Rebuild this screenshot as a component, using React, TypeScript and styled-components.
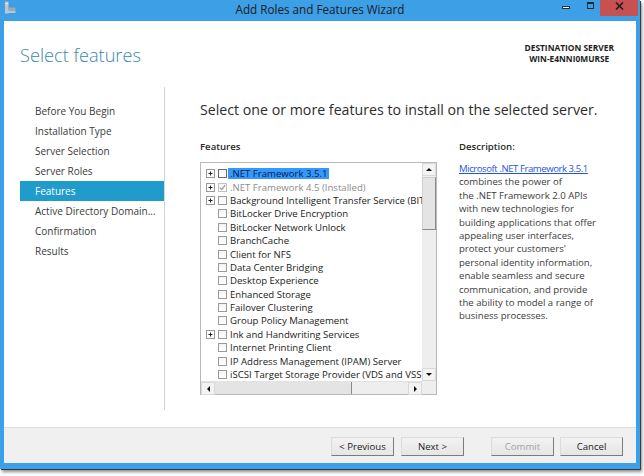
import React from 'react';
import styled, { createGlobalStyle } from 'styled-components';

const GlobalStyle = createGlobalStyle`
  html, body {
    margin: 0;
    padding: 0;
    background: #ffffff;
  }
  body {
    font-family: "Open Sans", "Noto Sans", sans-serif;
  }
  svg {
    display: block;
  }
`;

const Stage = styled.div`
  width: 644px;
  height: 476px;
  background: #ffffff;
  overflow: hidden;
`;

const Window = styled.div`
  width: 640px;
  height: 469px;
  box-sizing: border-box;
  padding-bottom: 6px;
  background: #3d9fe6;
  display: flex;
  flex-direction: column;
  box-shadow: 1px 1px 0 #3a3a3a, 2px 3px 3px rgba(0, 0, 0, 0.45);
`;

const TitleBar = styled.div`
  height: 21px;
  display: grid;
  grid-template-columns: 1fr auto 1fr;
  align-items: start;
`;

const AppIcon = styled.svg`
  margin: 1px 0 0 4px;
`;

const Title = styled.div`
  font-size: 11.7px;
  line-height: 19px;
  color: #1b1b1b;
`;

const Controls = styled.div`
  justify-self: end;
  display: flex;
  align-items: flex-start;
  padding-right: 2px;
`;

const MinGlyph = styled.div`
  width: 6px;
  height: 1px;
  margin-top: 6px;
  background: #ffffff;
  border: 1px solid #24313d;
`;

const MaxGlyph = styled.div`
  width: 5px;
  height: 4px;
  margin: 2px 0 0 17px;
  border: 1px solid #1f2a33;
  border-top-width: 2px;
`;

const CloseButton = styled.div`
  width: 38px;
  height: 16px;
  margin-left: 6px;
  background: #c75050;
  display: flex;
  align-items: flex-start;
  justify-content: center;
  padding-top: 2px;
  box-sizing: border-box;
`;

const Client = styled.div`
  flex: 1;
  margin: 0 4px;
  background: #ffffff;
  display: flex;
  flex-direction: column;
`;

const Header = styled.div`
  height: 66px;
  flex: none;
  display: flex;
  justify-content: space-between;
  align-items: flex-start;
  padding: 0 22px 0 16px;
`;

const PageTitle = styled.h1`
  margin: 22px 0 0;
  font-size: 18.2px;
  line-height: 24px;
  font-weight: 300;
  color: #3a8aa6;
`;

const DestServer = styled.div`
  margin-top: 21px;
  font-size: 8.4px;
  line-height: 11px;
  font-weight: 700;
  color: #1e1e1e;
  text-align: center;
`;

const Body = styled.div`
  flex: 1;
  display: flex;
  min-height: 0;
`;

const Nav = styled.nav`
  width: 144px;
  flex: none;
  margin: 0 0 17px 16px;
  padding-top: 14px;
  border-right: 1px solid #d6d6d6;
`;

const NavItem = styled.div<{ $active?: boolean }>`
  height: 20px;
  line-height: 20px;
  padding-left: 15px;
  font-size: 10px;
  white-space: nowrap;
  color: ${p => (p.$active ? '#ffffff' : '#3a3a3a')};
  background: ${p => (p.$active ? '#1f9bcc' : 'transparent')};
`;

const Main = styled.div`
  flex: 1;
  padding: 13px 0 0 35px;
`;

const MainHeading = styled.h2`
  margin: 0;
  font-size: 14.2px;
  line-height: 20px;
  font-weight: 400;
  color: #2d2d2d;
  white-space: nowrap;
`;

const Columns = styled.div`
  display: flex;
  margin-top: 20px;
`;

const FeatureCol = styled.div`
  width: 237px;
  flex: none;
`;

const SectionLabel = styled.div`
  font-size: 9.6px;
  line-height: 14px;
  font-weight: 600;
  color: #2a2a2a;
  margin-bottom: 8px;
`;

const ListBox = styled.div`
  height: 233px;
  box-sizing: border-box;
  border: 1px solid #b9b9b9;
  display: grid;
  grid-template-columns: 1fr 14px;
  grid-template-rows: 1fr 13px;
`;

const Items = styled.div`
  padding-top: 4px;
  overflow: hidden;
`;

const Row = styled.div`
  height: 13.4px;
  display: flex;
  align-items: center;
  padding-left: 5px;
  white-space: nowrap;
`;

const ExpanderSlot = styled.div`
  width: 9px;
  height: 9px;
  flex: none;
  display: flex;
`;

const Check = styled.div<{ $focus?: boolean; $disabled?: boolean }>`
  width: 9px;
  height: 9px;
  flex: none;
  margin-left: 3px;
  box-sizing: border-box;
  border: 1px solid ${p => (p.$focus ? '#6a6a6a' : p.$disabled ? '#c2c2c2' : '#9a9a9a')};
  background: linear-gradient(#f4f4f4, #ffffff);
  display: flex;
  align-items: center;
  justify-content: center;
`;

const ItemLabel = styled.span<{ $selected?: boolean; $disabled?: boolean }>`
  margin-left: 1px;
  padding: 0 2px;
  font-size: 9.6px;
  line-height: 11px;
  color: ${p => (p.$disabled ? '#8c8c8c' : p.$selected ? '#0c1a44' : '#222222')};
  background: ${p => (p.$selected ? '#3399ff' : 'transparent')};
`;

const VScroll = styled.div`
  background: #eeeeee;
  display: flex;
  flex-direction: column;
`;

const HScroll = styled.div`
  background: #eeeeee;
  border-top: 1px solid #e2e2e2;
  display: flex;
`;

const Corner = styled.div`
  background: #eeeeee;
`;

const ArrowBtn = styled.div<{ $dir: 'up' | 'down' | 'left' | 'right' }>`
  width: 14px;
  height: 13px;
  flex: none;
  box-sizing: border-box;
  background: #f3f3f3;
  border: 1px solid #d9d9d9;
  display: flex;
  align-items: center;
  justify-content: center;
  margin-top: ${p => (p.$dir === 'down' ? 'auto' : '0')};
  margin-left: ${p => (p.$dir === 'right' ? 'auto' : '0')};

  &::after {
    content: '';
    width: 0;
    height: 0;
    border: 3px solid transparent;
    ${p =>
      p.$dir === 'up'
        ? 'border-bottom: 3px solid #111; border-top-width: 0;'
        : p.$dir === 'down'
        ? 'border-top: 3px solid #111; border-bottom-width: 0;'
        : p.$dir === 'left'
        ? 'border-right: 3px solid #111; border-left-width: 0;'
        : 'border-left: 3px solid #111; border-right-width: 0;'}
  }
`;

const VThumb = styled.div`
  height: 53px;
  margin-top: 1px;
  box-sizing: border-box;
  background: #e4e4e4;
  border: 1px solid #d0d0d0;
  border-right-color: #8a8a8a;
  border-bottom-color: #8a8a8a;
`;

const HThumb = styled.div`
  width: 137px;
  flex: none;
  box-sizing: border-box;
  background: #e4e4e4;
  border-right: 1px solid #8a8a8a;
`;

const DescCol = styled.div`
  width: 150px;
  flex: none;
  margin-left: 22px;
`;

const DescText = styled.div`
  font-size: 9.6px;
  line-height: 13.4px;
  color: #3c3c3c;
  white-space: nowrap;
`;

const DescLink = styled.a`
  display: block;
  color: #1f55d8;
  text-decoration: underline;
  letter-spacing: -0.45px;
`;

const DescLine = styled.div``;

const Footer = styled.div`
  height: 36px;
  flex: none;
  box-sizing: border-box;
  border-top: 1px solid #dfdfdf;
  background: #f0f0f0;
  display: flex;
  justify-content: flex-end;
  align-items: flex-start;
  padding: 9px 13px 0 0;
`;

const Button = styled.button<{ $gap: number; $disabled?: boolean }>`
  width: 63px;
  height: 19px;
  margin: 0 0 0 ${p => p.$gap}px;
  padding: 0;
  box-sizing: border-box;
  border: 1px solid;
  border-color: #dcdcdc #7c7c7c #7c7c7c #dcdcdc;
  background: linear-gradient(#f2f2f2, #e6e6e6);
  font-family: "Open Sans", "Noto Sans", sans-serif;
  font-size: 9.6px;
  line-height: 15px;
  color: ${p => (p.$disabled ? '#a3a3a3' : '#222222')};
`;

type Feature = {
  label: string;
  expand?: boolean;
  checked?: boolean;
  disabled?: boolean;
  selected?: boolean;
};

const features: Feature[] = [
  { label: '.NET Framework 3.5.1', expand: true, selected: true },
  { label: '.NET Framework 4.5 (Installed)', expand: true, checked: true, disabled: true },
  { label: 'Background Intelligent Transfer Service (BITS)', expand: true },
  { label: 'BitLocker Drive Encryption' },
  { label: 'BitLocker Network Unlock' },
  { label: 'BranchCache' },
  { label: 'Client for NFS' },
  { label: 'Data Center Bridging' },
  { label: 'Desktop Experience' },
  { label: 'Enhanced Storage' },
  { label: 'Failover Clustering' },
  { label: 'Group Policy Management' },
  { label: 'Ink and Handwriting Services', expand: true },
  { label: 'Internet Printing Client' },
  { label: 'IP Address Management (IPAM) Server' },
  { label: 'iSCSI Target Storage Provider (VDS and VSS hardware providers)' },
];

const navItems = [
  'Before You Begin',
  'Installation Type',
  'Server Selection',
  'Server Roles',
  'Features',
  'Active Directory Domain...',
  'Confirmation',
  'Results',
];

const descLines = [
  'combines the power of',
  'the .NET Framework 2.0 APIs',
  'with new technologies for',
  'building applications that offer',
  'appealing user interfaces,',
  "protect your customers'",
  'personal identity information,',
  'enable seamless and secure',
  'communication, and provide',
  'the ability to model a range of',
  'business processes.',
];

const Expander = () => (
  <svg width="9" height="9" viewBox="0 0 9 9">
    <rect x="0.5" y="0.5" width="8" height="8" fill="#fbfbfb" stroke="#9a9a9a" />
    <path d="M2.5 4.5h4M4.5 2.5v4" stroke="#222" strokeWidth="1" />
  </svg>
);

const CheckMark = () => (
  <svg width="7" height="7" viewBox="0 0 7 7">
    <path d="M0.8 3.6 L2.7 5.5 L6.2 1.2" fill="none" stroke="#9a9a9a" strokeWidth="1.2" />
  </svg>
);

const App: React.FC = () => {
  return (
    <Stage>
      <GlobalStyle />
      <Window>
        <TitleBar>
          <AppIcon width="12" height="14" viewBox="0 0 12 14">
            <rect x="1" y="0.5" width="3.5" height="12" fill="#b9c7d4" />
            <rect x="1.5" y="2" width="2.5" height="1" fill="#e8eef3" />
            <rect x="4" y="6.5" width="7.5" height="2.5" fill="#a6a6a6" />
            <rect x="4" y="9.5" width="7.5" height="2.5" fill="#c4c4c4" />
          </AppIcon>
          <Title>Add Roles and Features Wizard</Title>
          <Controls>
            <MinGlyph />
            <MaxGlyph />
            <CloseButton>
              <svg width="9" height="8" viewBox="0 0 9 8">
                <path d="M1 0.5 L8 7.5 M8 0.5 L1 7.5" stroke="#1e1e1e" strokeWidth="1.6" />
              </svg>
            </CloseButton>
          </Controls>
        </TitleBar>

        <Client>
          <Header>
            <PageTitle>Select features</PageTitle>
            <DestServer>
              DESTINATION SERVER
              <br />
              WIN-E4NNI0MURSE
            </DestServer>
          </Header>

          <Body>
            <Nav>
              {navItems.map(item => (
                <NavItem key={item} $active={item === 'Features'}>
                  {item}
                </NavItem>
              ))}
            </Nav>

            <Main>
              <MainHeading>Select one or more features to install on the selected server.</MainHeading>
              <Columns>
                <FeatureCol>
                  <SectionLabel>Features</SectionLabel>
                  <ListBox>
                    <Items>
                      {features.map(f => (
                        <Row key={f.label}>
                          <ExpanderSlot>{f.expand && <Expander />}</ExpanderSlot>
                          <Check $focus={f.selected} $disabled={f.disabled}>
                            {f.checked && <CheckMark />}
                          </Check>
                          <ItemLabel $selected={f.selected} $disabled={f.disabled}>
                            {f.label}
                          </ItemLabel>
                        </Row>
                      ))}
                    </Items>
                    <VScroll>
                      <ArrowBtn $dir="up" />
                      <VThumb />
                      <ArrowBtn $dir="down" />
                    </VScroll>
                    <HScroll>
                      <ArrowBtn $dir="left" />
                      <HThumb />
                      <ArrowBtn $dir="right" />
                    </HScroll>
                    <Corner />
                  </ListBox>
                </FeatureCol>

                <DescCol>
                  <SectionLabel>Description:</SectionLabel>
                  <DescText>
                    <DescLink href="#">Microsoft .NET Framework 3.5.1</DescLink>
                    {descLines.map(line => (
                      <DescLine key={line}>{line}</DescLine>
                    ))}
                  </DescText>
                </DescCol>
              </Columns>
            </Main>
          </Body>

          <Footer>
            <Button $gap={0}>&lt; Previous</Button>
            <Button $gap={7}>Next &gt;</Button>
            <Button $gap={27} $disabled>
              Commit
            </Button>
            <Button $gap={6}>Cancel</Button>
          </Footer>
        </Client>
      </Window>
    </Stage>
  );
};

export default App;
